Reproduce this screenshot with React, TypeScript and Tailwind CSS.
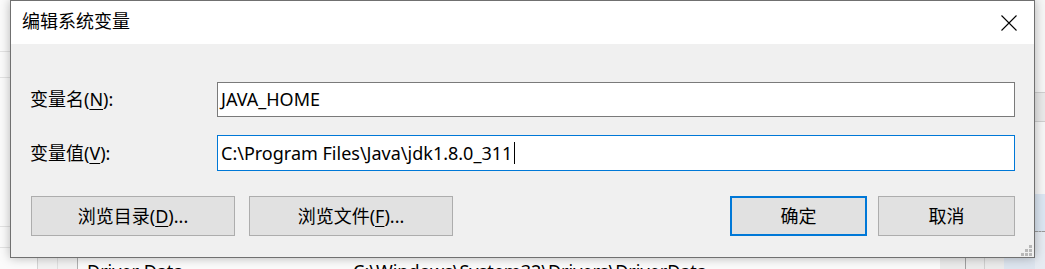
import React from "react";

const UI_FONT = "font-['Segoe_UI','Noto_Sans','Noto_Sans_CJK_SC',sans-serif]";

function Key({ children }: { children: React.ReactNode }) {
  return <span className="underline decoration-1 underline-offset-[3px]">{children}</span>;
}

function CloseIcon() {
  return (
    <svg width="16" height="16" viewBox="0 0 16 16" aria-hidden>
      <path d="M0.5 0.5 L15.5 15.5 M15.5 0.5 L0.5 15.5" stroke="#000" strokeWidth="1.1" fill="none" />
    </svg>
  );
}

function Grip() {
  const dots = [
    [8, 0],
    [4, 4],
    [8, 4],
    [0, 8],
    [4, 8],
    [8, 8],
  ];
  return (
    <svg width="11" height="11" viewBox="0 0 11 11" aria-hidden>
      {dots.map(([x, y]) => (
        <rect key={`${x}-${y}`} x={x} y={y} width="3" height="3" fill="#b8b8b8" />
      ))}
    </svg>
  );
}

function Button({ children, primary, w }: { children: React.ReactNode; primary?: boolean; w: string }) {
  return (
    <button
      className={`${w} h-10 bg-[#e1e1e1] text-[18px] text-black flex items-center justify-center ${
        primary ? "border-2 border-[#0078d7]" : "border border-[#adadad]"
      }`}
    >
      {children}
    </button>
  );
}

// window behind the dialog, only its edges show
function Backdrop() {
  return (
    <div className="absolute inset-0 bg-[#fbfbfb]">
      <div className="flex flex-col h-full">
        <div className="h-[52px] shrink-0 border-b border-[#e3e3e3]" />
        <div className="h-[26px] shrink-0 border-b border-[#e3e3e3]" />
        <div className="h-[149px] shrink-0 border-b border-[#e3e3e3]" />
        <div className="h-[21px] shrink-0 border-b border-[#e3e3e3]" />
        <div className="flex-1 min-h-0 overflow-hidden flex text-[18px] leading-none text-black">
          <div className="w-[38px] border-r border-[#d5d5d5]" />
          <div className="w-[20px] border-r border-[#e0e0e0] bg-[#f3f3f3]" />
          <div className="w-[20px] border-r border-[#b0b0b0] bg-[#f3f3f3]" />
          <div className="w-[275px] pl-[9px] pt-[14px] whitespace-nowrap">Driver Data</div>
          <div className="w-[587px] pt-[14px] whitespace-nowrap">C:\Windows\System32\Drivers\DriverData</div>
          <div className="w-[26px] bg-[#ececec] border-r border-[#a0a0a0]" />
          <div className="w-[19px] bg-[#ececec] border-r border-[#d0d0d0]" />
          <div className="w-[19px] bg-[#ececec]" />
          <div className="flex-1 bg-[#dde5ef]" />
        </div>
      </div>
      <div className="absolute right-0 top-0 w-[10px] h-full flex flex-col">
        <div className="h-[93px] shrink-0 bg-[#f6f6f6] border-b border-[#cfcfcf]" />
        <div className="h-[29px] shrink-0 bg-[#e9e9e9] border-b border-[#cfcfcf]" />
        <div className="h-[72px] shrink-0 bg-[#f6f6f6]" />
        <div className="h-[38px] shrink-0 bg-[#dbe6f2] border-b border-dashed border-[#9a9a9a]" />
        <div className="flex-1 bg-[#e6ebf2]" />
      </div>
    </div>
  );
}

export default function App() {
  return (
    <div className={`relative w-[1045px] h-[269px] overflow-hidden ${UI_FONT}`}>
      <Backdrop />
      <div className="absolute left-[10px] top-0 w-[1025px] h-[258px] border border-[#707070] bg-[#f0f0f0] shadow-[0_0_10px_rgba(0,0,0,0.28)] flex flex-col">
        <div className="h-[43px] bg-white flex items-center justify-between pl-[11px] pr-[17px]">
          <span className="text-[18px] text-black pb-[2px]">编辑系统变量</span>
          <CloseIcon />
        </div>
        <div className="relative flex-1 flex flex-col pt-[38px] pl-[19px] pr-[19px] text-[18px] text-black">
          <div className="flex items-center h-[35px]">
            <span className="w-[187px]">
              变量名(<Key>N</Key>):
            </span>
            <div className="flex-1 h-full bg-white border border-[#7a7a7a] flex items-center pl-[3px]">JAVA_HOME</div>
          </div>
          <div className="flex items-center h-[36px] mt-[18px]">
            <span className="w-[187px]">
              变量值(<Key>V</Key>):
            </span>
            <div className="flex-1 h-full bg-white border border-[#0078d7] flex items-center pl-[3px]">
              C:\Program Files\Java\jdk1.8.0_311
              <span className="inline-block w-px h-[22px] bg-black ml-[2px]" />
            </div>
          </div>
          <div className="flex mt-[25px] pl-px">
            <div className="flex gap-[14px]">
              <Button w="w-[204px]">
                浏览目录(<Key>D</Key>)...
              </Button>
              <Button w="w-[204px]">
                浏览文件(<Key>F</Key>)...
              </Button>
            </div>
            <div className="flex gap-[11px] ml-auto">
              <Button w="w-[137px]" primary>
                确定
              </Button>
              <Button w="w-[137px]">取消</Button>
            </div>
          </div>
          <div className="absolute right-[2px] bottom-[1px]">
            <Grip />
          </div>
        </div>
      </div>
    </div>
  );
}
